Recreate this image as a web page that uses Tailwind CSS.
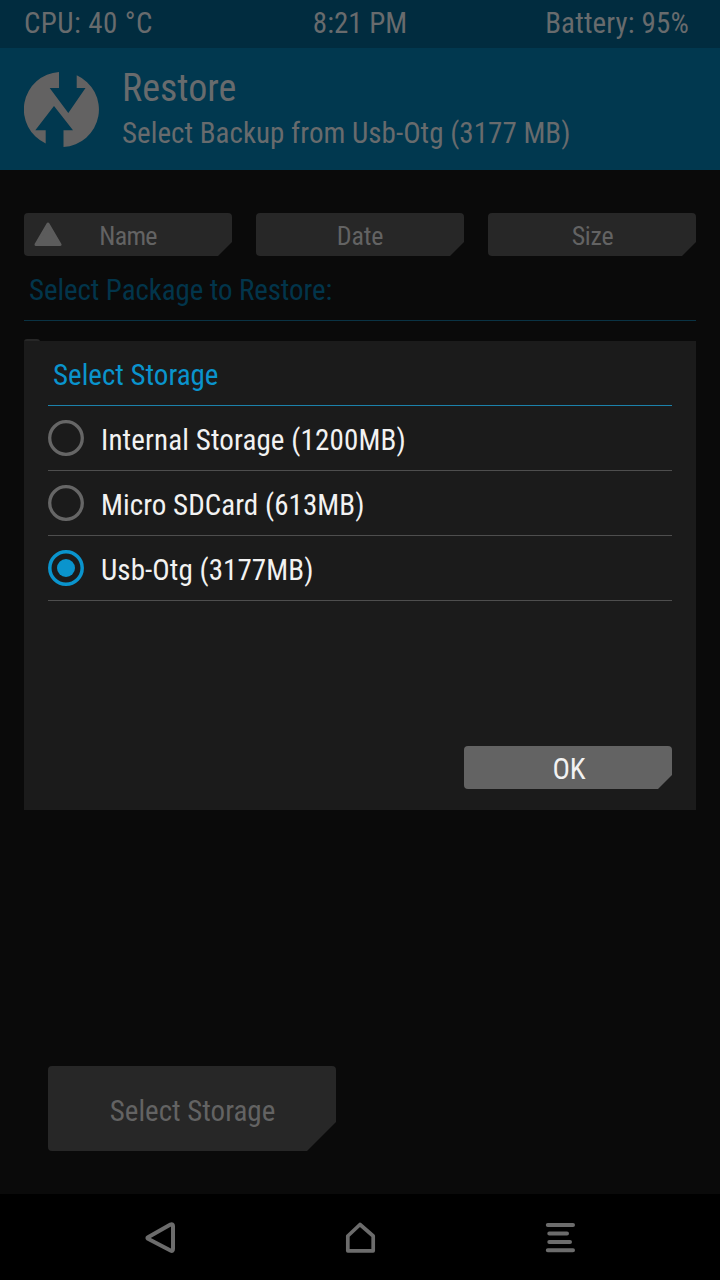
<!DOCTYPE html>
<html lang="en">
<head>
<meta charset="utf-8">
<title>Restore</title>
<script src="https://cdn.jsdelivr.net/npm/@tailwindcss/browser@4"></script>
</head>
<body class="bg-[#0a0a0a]">
<div class="relative flex h-[1280px] w-[720px] flex-col overflow-hidden bg-[#0a0a0a] font-['Roboto_Condensed',Roboto,sans-serif] text-[29px] leading-none whitespace-nowrap text-[#636363] font-stretch-condensed">
  <header class="h-[170px] bg-[#01384f] text-[#686b6d]">
    <div class="grid h-12 grid-cols-3 items-center bg-[#012c3f] pr-[31px] pb-px pl-6">
      <span class="justify-self-start tracking-[0.4px]">CPU: 40 °C</span>
      <span class="ml-[7px] justify-self-center">8:21 PM</span>
      <span class="justify-self-end tracking-[0.15px]">Battery: 95%</span>
    </div>
    <div class="flex pt-6 pl-6">
      <svg class="size-[75px]" viewBox="0 0 75 75" fill="#636262">
        <path d="M35 0V16H25.700L44.300 41L61.500 16H52.700V3.300A37.500 37.500 0 0 1 39.500 75V58.300H49L30 34L11.300 58.300H21.700V71.500A37.500 37.500 0 0 1 35 0Z"/>
      </svg>
      <div class="ml-[23px] flex flex-col">
        <h1 class="mt-[-3px] self-start text-[38px]">Restore</h1>
        <p class="mt-3 self-start tracking-[0.03px]">Select Backup from Usb-Otg (3177 MB)</p>
      </div>
    </div>
  </header>

  <main class="flex-1 px-6 pt-[43px]">
    <div class="grid grid-cols-3 gap-6 text-[26px]">
      <div class="relative flex h-[43px] items-center justify-center rounded-[4px] bg-[#272727] pt-[3px] [clip-path:polygon(0_0,100%_0,100%_29px,calc(100%-14px)_100%,0_100%)]">
        <svg class="absolute top-[9px] left-[10px] h-[25px] w-7" viewBox="0 0 28 25" fill="#5c5c5c" stroke="#5c5c5c" stroke-width="3" stroke-linejoin="round"><path d="M14 2L26 22.500H2Z"/></svg>
        <span class="tracking-[-0.7px]">Name</span>
      </div>
      <div class="flex h-[43px] items-center justify-center rounded-[4px] bg-[#272727] pt-[3px] [clip-path:polygon(0_0,100%_0,100%_29px,calc(100%-14px)_100%,0_100%)]"><span class="tracking-[-0.2px]">Date</span></div>
      <div class="flex h-[43px] items-center justify-center rounded-[4px] bg-[#272727] pt-[3px] pl-px [clip-path:polygon(0_0,100%_0,100%_29px,calc(100%-14px)_100%,0_100%)]"><span class="tracking-[-0.3px]">Size</span></div>
    </div>
    <div class="flex h-[65px] items-center border-b border-[#0a3344] pt-1 pl-[5px] text-[#02354b]"><span class="tracking-[-0.1px]">Select Package to Restore:</span></div>
    <div class="mt-[18px] h-[3px] w-4 rounded-t bg-[#272727]"></div>
    <div class="mt-[724px] ml-6 flex h-[85px] w-72 items-center justify-center rounded-[4px] bg-[#272727] pt-1.5 pl-px [clip-path:polygon(0_0,100%_0,100%_56px,calc(100%-29px)_100%,0_100%)]"><span>Select Storage</span></div>
  </main>

  <nav class="flex h-[86px] items-center justify-between bg-black px-[144px] text-[#6c6c6c]">
    <svg class="h-8 w-8" viewBox="0 0 32 32" fill="none" stroke="currentColor" stroke-width="4" stroke-linejoin="round"><path d="M4 16.300L26.500 3.500Q29 2.500 29 5V28Q29 30.800 26.500 29.500L4 17.800Q2.800 17 4 16.300Z"/></svg>
    <svg class="h-8 w-8" viewBox="0 0 32 32" fill="none" stroke="currentColor" stroke-width="3.700" stroke-linejoin="round"><path d="M16 3.500L29.200 15V29.800H3.800V15Z"/></svg>
    <svg class="h-8 w-8" viewBox="0 0 32 32" fill="none" stroke="currentColor" stroke-width="4" stroke-linecap="round"><path d="M3.800 4H29M5.300 12.500H23M5.300 21H26M3.800 29.300H29"/></svg>
  </nav>

  <section class="absolute top-[341px] left-6 flex h-[469px] w-[672px] flex-col bg-[#1b1b1b] px-6 text-[#f2f2f2]">
    <h2 class="flex h-[65px] items-center border-b border-b-[#1c82ab] pt-[5px] pl-[5px] text-[#0a94cd]"><span>Select Storage</span></h2>
    <div class="flex h-[65px] items-center gap-[17px] border-b border-[#4e4e4e]">
      <svg class="size-9" viewBox="0 0 36 36" fill="none" stroke="#666"><circle cx="18" cy="18" r="16.300" stroke-width="3.300"/></svg>
      <span class="mt-[5px] tracking-[0.13px]">Internal Storage (1200MB)</span>
    </div>
    <div class="flex h-[65px] items-center gap-[17px] border-b border-[#4e4e4e]">
      <svg class="size-9" viewBox="0 0 36 36" fill="none" stroke="#666"><circle cx="18" cy="18" r="16.300" stroke-width="3.300"/></svg>
      <span class="mt-[5px] tracking-[0.06px]">Micro SDCard (613MB)</span>
    </div>
    <div class="flex h-[65px] items-center gap-[17px] border-b border-[#4e4e4e]">
      <svg class="size-9" viewBox="0 0 36 36" fill="none" stroke="#0a94cd"><circle cx="18" cy="18" r="16.200" stroke-width="3.500"/><circle cx="18" cy="18" r="9" fill="#0a94cd" stroke="none"/></svg>
      <span class="mt-[5px] tracking-[0.07px]">Usb-Otg (3177MB)</span>
    </div>
    <button class="mt-auto mb-[21px] flex h-[43px] w-52 items-center justify-center self-end rounded-[4px] bg-[#636363] pt-[3px] pl-0.5 [clip-path:polygon(0_0,100%_0,100%_29px,calc(100%-14px)_100%,0_100%)]"><span>OK</span></button>
  </section>
</div>
</body>
</html>
